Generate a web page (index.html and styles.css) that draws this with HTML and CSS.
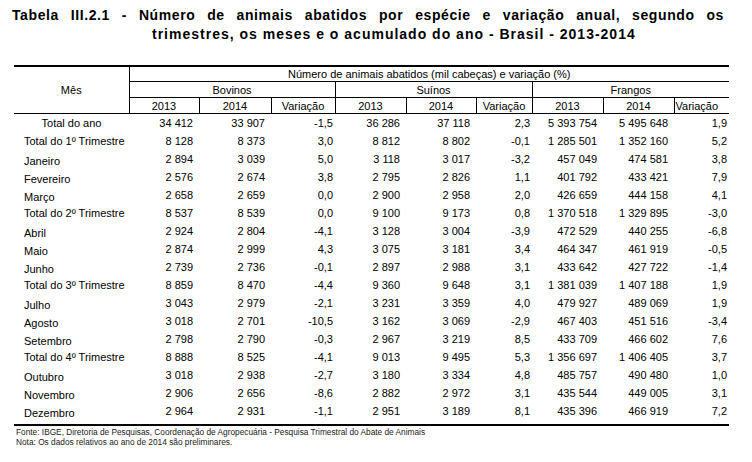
FILE: index.html
```html
<!DOCTYPE html>
<html lang="pt-BR">
<head>
<meta charset="utf-8">
<title>Tabela III.2.1</title>
<link rel="stylesheet" href="styles.css">
</head>
<body>
<div class="sheet">
  <div class="title">
    <div class="title-l1">Tabela III.2.1 - Número de animais abatidos por espécie e variação anual, segundo os</div>
    <div class="title-l2">trimestres, os meses e o acumulado do ano - Brasil - 2013-2014</div>
  </div>
  <table class="data">
    <colgroup>
      <col class="c-mes"><col class="c-a"><col class="c-b"><col class="c-v1">
      <col class="c-c"><col class="c-d"><col class="c-v2">
      <col class="c-e"><col class="c-f"><col class="c-v3">
    </colgroup>
    <thead>
      <tr class="r1">
        <td class="mes" rowspan="3">Mês</td>
        <td colspan="9" class="vl">Número de animais abatidos (mil cabeças) e variação (%)</td>
      </tr>
      <tr class="r2">
        <td colspan="3" class="vl">Bovinos</td>
        <td colspan="3" class="vl">Suínos</td>
        <td colspan="3" class="vl">Frangos</td>
      </tr>
      <tr class="r3">
        <td class="vl">2013</td><td class="vl">2014</td><td class="vl">Variação</td>
        <td class="vl">2013</td><td class="vl">2014</td><td class="vl">Variação</td>
        <td class="vl">2013</td><td class="vl">2014</td><td class="vl left">Variação</td>
      </tr>
    </thead>
    <tbody>
      <tr><td class="lbl ctr">Total do ano</td><td>34 412</td><td>33 907</td><td class="v">-1,5</td><td>36 286</td><td>37 118</td><td class="v">2,3</td><td>5 393 754</td><td>5 495 648</td><td class="v">1,9</td></tr>
      <tr><td class="lbl">Total do 1º Trimestre</td><td>8 128</td><td>8 373</td><td class="v">3,0</td><td>8 812</td><td>8 802</td><td class="v">-0,1</td><td>1 285 501</td><td>1 352 160</td><td class="v">5,2</td></tr>
      <tr><td class="lbl mo">Janeiro</td><td>2 894</td><td>3 039</td><td class="v">5,0</td><td>3 118</td><td>3 017</td><td class="v">-3,2</td><td>457 049</td><td>474 581</td><td class="v">3,8</td></tr>
      <tr><td class="lbl mo">Fevereiro</td><td>2 576</td><td>2 674</td><td class="v">3,8</td><td>2 795</td><td>2 826</td><td class="v">1,1</td><td>401 792</td><td>433 421</td><td class="v">7,9</td></tr>
      <tr><td class="lbl mo">Março</td><td>2 658</td><td>2 659</td><td class="v">0,0</td><td>2 900</td><td>2 958</td><td class="v">2,0</td><td>426 659</td><td>444 158</td><td class="v">4,1</td></tr>
      <tr><td class="lbl">Total do 2º Trimestre</td><td>8 537</td><td>8 539</td><td class="v">0,0</td><td>9 100</td><td>9 173</td><td class="v">0,8</td><td>1 370 518</td><td>1 329 895</td><td class="v">-3,0</td></tr>
      <tr><td class="lbl mo">Abril</td><td>2 924</td><td>2 804</td><td class="v">-4,1</td><td>3 128</td><td>3 004</td><td class="v">-3,9</td><td>472 529</td><td>440 255</td><td class="v">-6,8</td></tr>
      <tr><td class="lbl mo">Maio</td><td>2 874</td><td>2 999</td><td class="v">4,3</td><td>3 075</td><td>3 181</td><td class="v">3,4</td><td>464 347</td><td>461 919</td><td class="v">-0,5</td></tr>
      <tr><td class="lbl mo">Junho</td><td>2 739</td><td>2 736</td><td class="v">-0,1</td><td>2 897</td><td>2 988</td><td class="v">3,1</td><td>433 642</td><td>427 722</td><td class="v">-1,4</td></tr>
      <tr><td class="lbl">Total do 3º Trimestre</td><td>8 859</td><td>8 470</td><td class="v">-4,4</td><td>9 360</td><td>9 648</td><td class="v">3,1</td><td>1 381 039</td><td>1 407 188</td><td class="v">1,9</td></tr>
      <tr><td class="lbl mo">Julho</td><td>3 043</td><td>2 979</td><td class="v">-2,1</td><td>3 231</td><td>3 359</td><td class="v">4,0</td><td>479 927</td><td>489 069</td><td class="v">1,9</td></tr>
      <tr><td class="lbl mo">Agosto</td><td>3 018</td><td>2 701</td><td class="v">-10,5</td><td>3 162</td><td>3 069</td><td class="v">-2,9</td><td>467 403</td><td>451 516</td><td class="v">-3,4</td></tr>
      <tr><td class="lbl mo">Setembro</td><td>2 798</td><td>2 790</td><td class="v">-0,3</td><td>2 967</td><td>3 219</td><td class="v">8,5</td><td>433 709</td><td>466 602</td><td class="v">7,6</td></tr>
      <tr><td class="lbl">Total do 4º Trimestre</td><td>8 888</td><td>8 525</td><td class="v">-4,1</td><td>9 013</td><td>9 495</td><td class="v">5,3</td><td>1 356 697</td><td>1 406 405</td><td class="v">3,7</td></tr>
      <tr><td class="lbl mo">Outubro</td><td>3 018</td><td>2 938</td><td class="v">-2,7</td><td>3 180</td><td>3 334</td><td class="v">4,8</td><td>485 757</td><td>490 480</td><td class="v">1,0</td></tr>
      <tr><td class="lbl mo">Novembro</td><td>2 906</td><td>2 656</td><td class="v">-8,6</td><td>2 882</td><td>2 972</td><td class="v">3,1</td><td>435 544</td><td>449 005</td><td class="v">3,1</td></tr>
      <tr class="last"><td class="lbl mo">Dezembro</td><td>2 964</td><td>2 931</td><td class="v">-1,1</td><td>2 951</td><td>3 189</td><td class="v">8,1</td><td>435 396</td><td>466 919</td><td class="v">7,2</td></tr>
    </tbody>
  </table>
  <div class="notes">
    <div>Fonte: IBGE, Diretoria de Pesquisas, Coordenação de Agropecuária - Pesquisa Trimestral do Abate de Animais</div>
    <div>Nota: Os dados relativos ao ano de 2014 são preliminares.</div>
  </div>
</div>
</body>
</html>
```

FILE: styles.css
```css
html, body {
  margin: 0;
  padding: 0;
  background: #ffffff;
}

body {
  color: #000000;
  font-family: "Liberation Sans", Arial, Helvetica, sans-serif;
}

.sheet {
  padding-top: 6px;
}

.title {
  font-weight: bold;
  font-size: 14px;
  line-height: 19px;
  color: #000000;
  letter-spacing: 1px;
}

.title-l1 {
  margin-left: 12px;
  width: 712px;
  text-align: justify;
  text-align-last: justify;
  white-space: nowrap;
  letter-spacing: 0.6px;
}

.title-l2 {
  padding-left: 152px;
  white-space: nowrap;
}

.data {
  margin: 21px 0 0 14px;
  border-collapse: collapse;
  table-layout: fixed;
  width: 715px;
  font-size: 11px;
  border-top: 2px solid #000000;
}

.c-mes { width: 115px; }
.c-a { width: 70px; }
.c-b { width: 72px; }
.c-v1 { width: 64px; }
.c-c { width: 71px; }
.c-d { width: 70px; }
.c-v2 { width: 56px; }
.c-e { width: 71px; }
.c-f { width: 71px; }
.c-v3 { width: 55px; }

.data td {
  padding: 0;
  white-space: nowrap;
}

.data thead td {
  text-align: center;
  line-height: 14px;
  vertical-align: middle;
}

.data .mes {
  border-bottom: 1px solid #000000;
}

.r1 td.vl {
  border-bottom: 1px solid #000000;
}

.r1 {
  height: 14px;
}

.r2 {
  height: 16px;
}

.r3 {
  height: 16px;
}

.r2 td {
  border-bottom: 1px solid #000000;
}

.r3 td {
  border-bottom: 1px solid #000000;
}

.vl {
  border-left: 1px solid #000000;
}

.data thead td.left {
  text-align: left;
  padding-left: 1px;
}

.data tbody tr {
  height: 18px;
}

.data tbody td {
  text-align: right;
  padding-right: 6px;
  line-height: 18px;
  vertical-align: top;
}

.data tbody td.v {
  padding-right: 2px;
}

.data tbody td.lbl {
  text-align: left;
  padding-left: 10px;
  padding-right: 0;
}

.data tbody td.ctr {
  text-align: center;
  padding-left: 0;
}

.data tbody td.mo {
  padding-top: 4px;
  line-height: 14px;
}

.data tbody tr.last td {
  padding-bottom: 4px;
  border-bottom: 2px solid #000000;
}

.notes {
  margin: 1px 0 0 16px;
  font-size: 8.3px;
  line-height: 10px;
  color: #1a1a1a;
}
```
